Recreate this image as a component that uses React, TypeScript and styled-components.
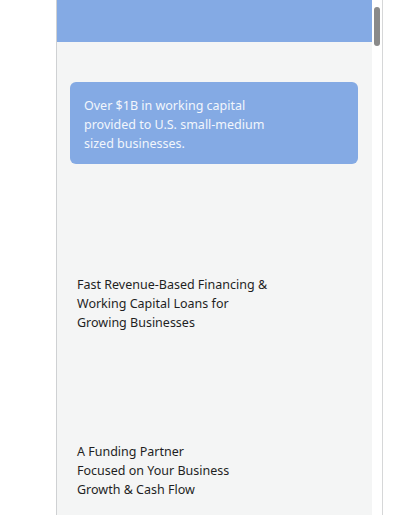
import React from "react";
import styled, { createGlobalStyle } from "styled-components";

const Global = createGlobalStyle`
  html, body { margin: 0; padding: 0; background: #ffffff; }
  body { font-family: "Noto Sans", "Open Sans", sans-serif; }
`;

const Page = styled.div`
  width: 412px;
  height: 515px;
  overflow: hidden;
  display: flex;
  background: #ffffff;
`;

const Frame = styled.div`
  margin-left: 56px;
  width: 327px;
  height: 515px;
  display: flex;
  border-left: 1px solid #cfd1d3;
  border-right: 1px solid #d6d7d8;
  box-sizing: border-box;
`;

const Viewport = styled.div`
  flex: 1;
  background: #f4f5f5;
  display: flex;
  flex-direction: column;
`;

const Header = styled.div`
  height: 42px;
  background: #84aae4;
  flex-shrink: 0;
`;

const Card = styled.div`
  margin: 40px 14px 0 13px;
  background: #84aae4;
  border-radius: 6px;
  padding: 14px;
  height: 82px;
  box-sizing: border-box;
  color: #f2f6fc;
  font-size: 12.5px;
  line-height: 19px;
`;

const Block = styled.p<{ $top: number }>`
  margin: ${(p) => p.$top}px 0 0 0;
  padding-left: 20px;
  color: #1f1f1f;
  font-size: 12.5px;
  line-height: 19px;
`;

const Track = styled.div`
  width: 10px;
  background: #ffffff;
  display: flex;
  justify-content: center;
  flex-shrink: 0;
`;

const Thumb = styled.div`
  margin-top: 7px;
  width: 6px;
  height: 39px;
  border-radius: 3px;
  background: #8a8a8a;
`;

export default function App() {
  return (
    <Page>
      <Global />
      <Frame>
        <Viewport>
          <Header />
          <Card>
            Over $1B in working capital
            <br />
            provided to U.S. small-medium
            <br />
            sized businesses.
          </Card>
          <Block $top={111}>
            Fast Revenue-Based Financing &amp;
            <br />
            Working Capital Loans for
            <br />
            Growing Businesses
          </Block>
          <Block $top={110}>
            A Funding Partner
            <br />
            Focused on Your Business
            <br />
            Growth &amp; Cash Flow
          </Block>
        </Viewport>
        <Track>
          <Thumb />
        </Track>
      </Frame>
    </Page>
  );
}
